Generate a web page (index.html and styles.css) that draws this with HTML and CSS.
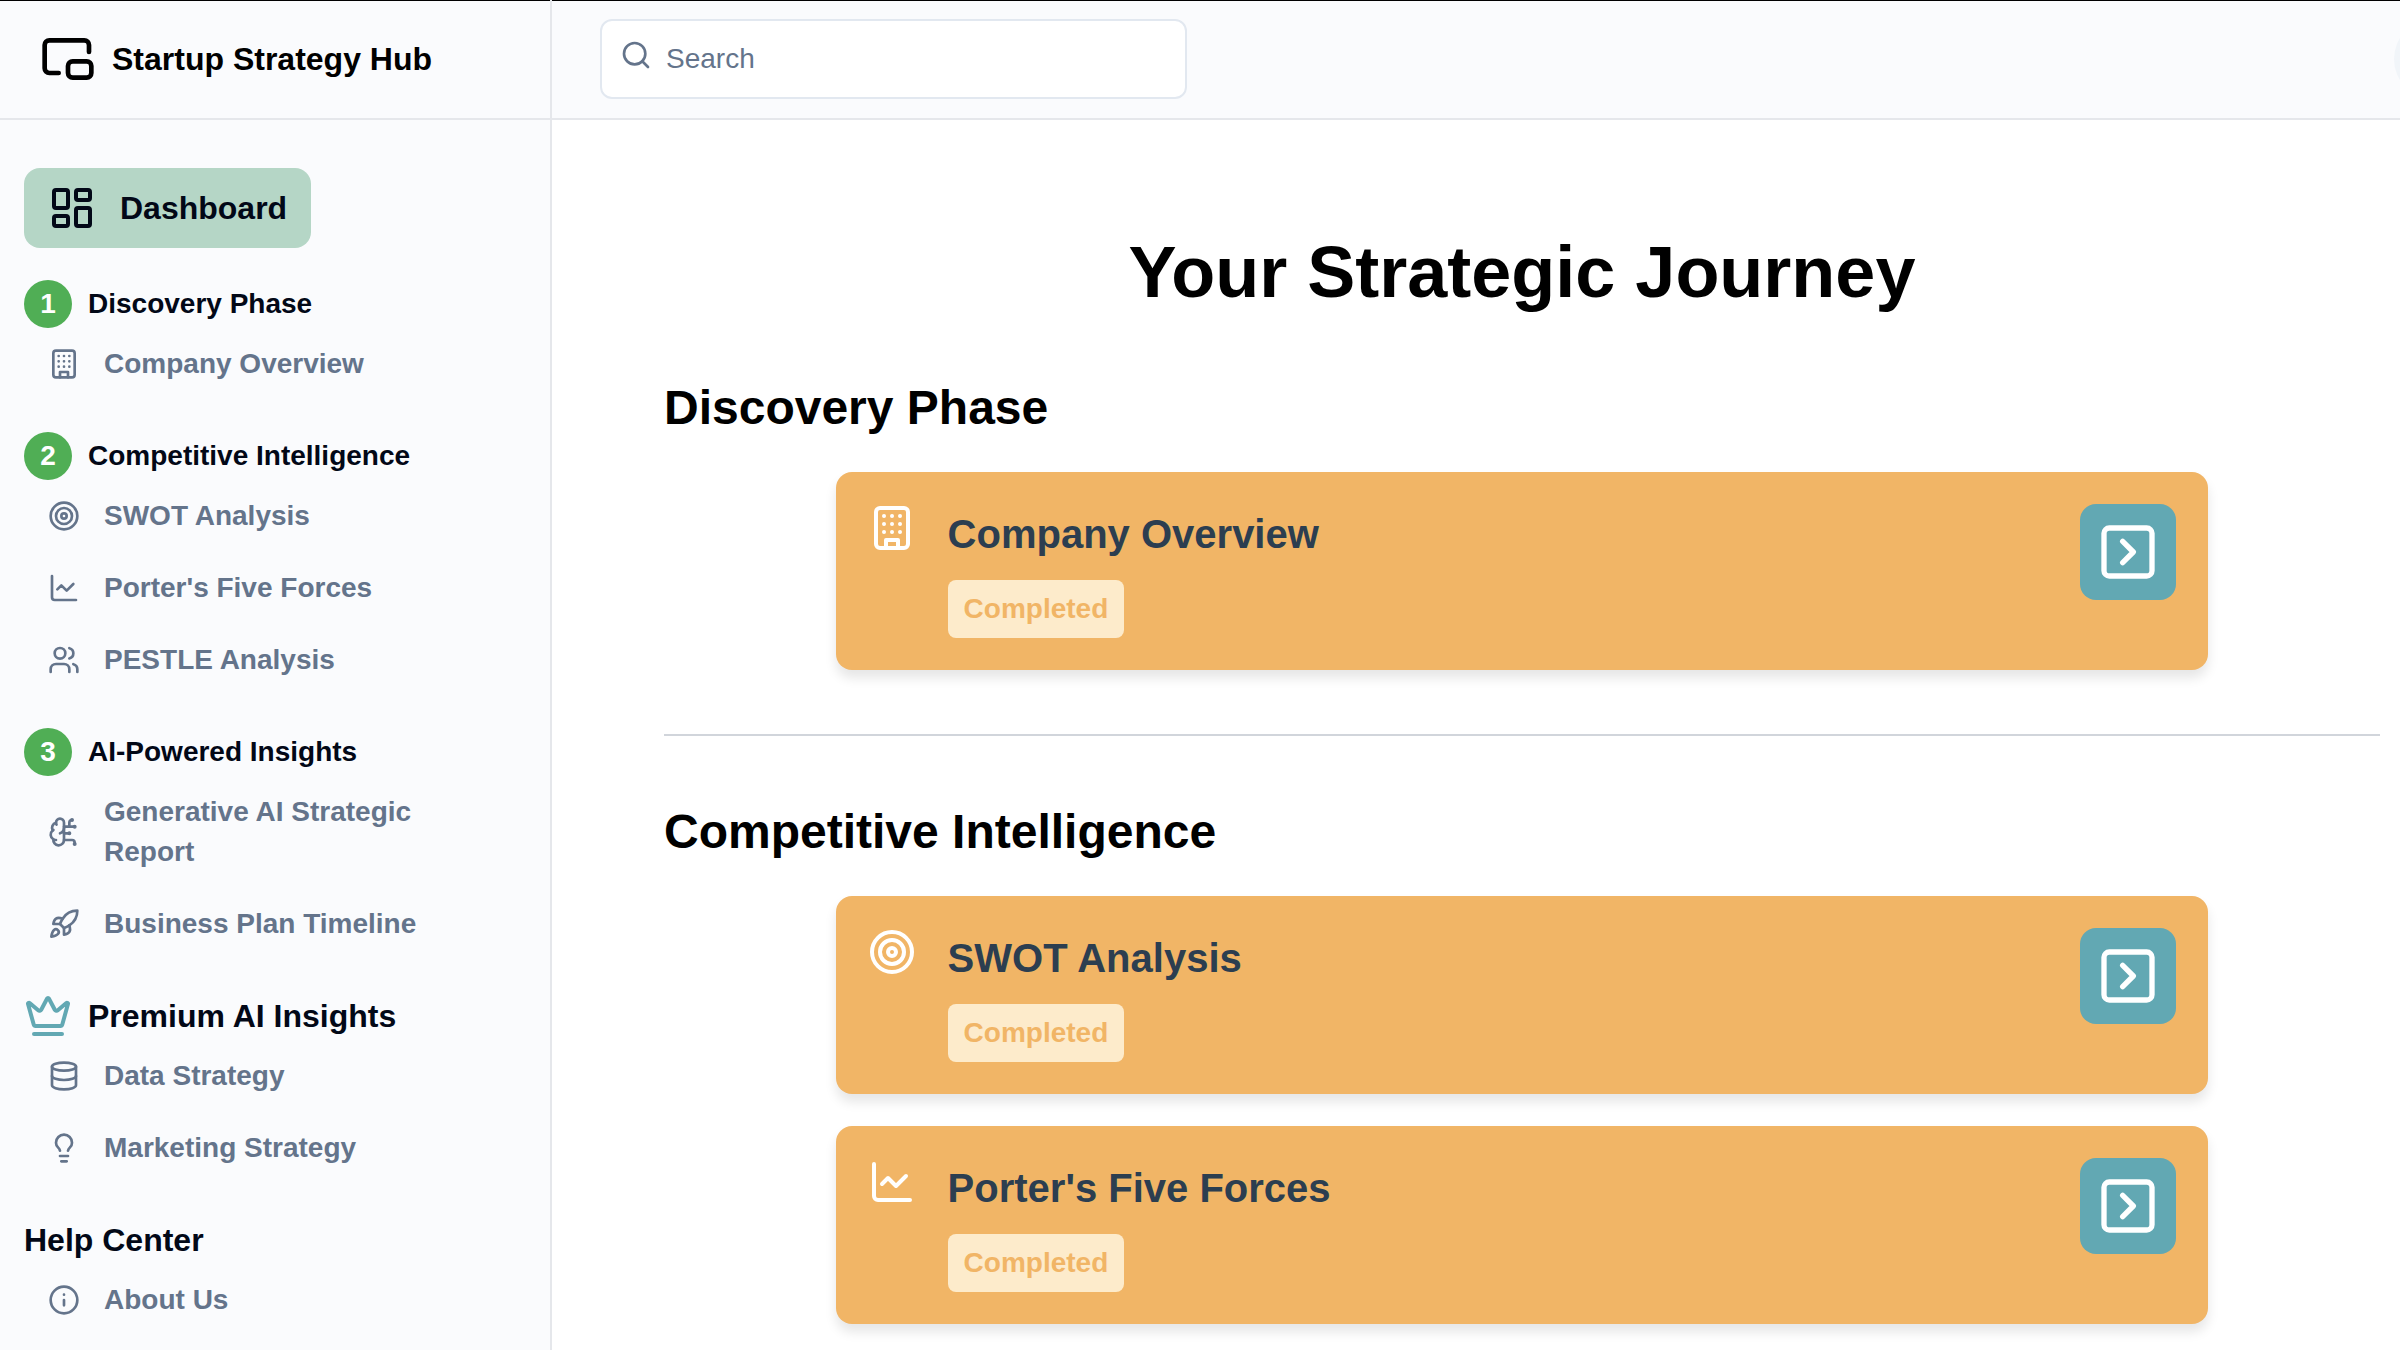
FILE: index.html
```
<!DOCTYPE html>
<html lang="en">
<head>
  <meta charset="UTF-8" />
  <meta name="viewport" content="width=device-width, initial-scale=1.0"/>
  <title>Startup Strategy Hub</title>
  <link rel="stylesheet" href="styles.css">
</head>
<body>
  <!-- shared icons -->
  <svg class="sprite" aria-hidden="true">
    <symbol id="building" viewBox="0 0 24 24">
      <rect width="16" height="20" x="4" y="2" rx="2"/>
      <path d="M9 22v-4h6v4M8 6h.01M16 6h.01M12 6h.01M12 10h.01M12 14h.01M16 10h.01M16 14h.01M8 10h.01M8 14h.01"/>
    </symbol>
    <symbol id="target" viewBox="0 0 24 24">
      <circle cx="12" cy="12" r="10"/><circle cx="12" cy="12" r="6"/><circle cx="12" cy="12" r="2"/>
    </symbol>
    <symbol id="chart" viewBox="0 0 24 24">
      <path d="M3 3v16a2 2 0 0 0 2 2h16"/><path d="m19 9-5 5-4-4-3 3"/>
    </symbol>
    <symbol id="chevron" viewBox="0 0 24 24">
      <rect width="18" height="18" x="3" y="3" rx="2"/><path d="m10 8 4 4-4 4"/>
    </symbol>
  </svg>

  <div class="layout">
    <aside class="sidebar">
      <div class="brand">
        <svg class="icon icon-lg" viewBox="0 0 24 24"><path d="M21 9V6a2 2 0 0 0-2-2H4a2 2 0 0 0-2 2v10a2 2 0 0 0 2 2h4"/><rect width="10" height="7" x="12" y="13" rx="2"/></svg>
        <span>Startup Strategy Hub</span>
      </div>

      <nav class="nav">
        <a href="#" class="nav-dashboard">
          <svg class="icon icon-md" viewBox="0 0 24 24"><rect width="7" height="9" x="3" y="3" rx="1"/><rect width="7" height="5" x="14" y="3" rx="1"/><rect width="7" height="9" x="14" y="12" rx="1"/><rect width="7" height="5" x="3" y="16" rx="1"/></svg>
          Dashboard
        </a>

        <div class="nav-group">
          <h3 class="nav-phase"><span class="step">1</span>Discovery Phase</h3>
          <a href="#" class="nav-link"><svg class="icon"><use href="#building"/></svg>Company Overview</a>
        </div>

        <div class="nav-group">
          <h3 class="nav-phase"><span class="step">2</span>Competitive Intelligence</h3>
          <a href="#" class="nav-link"><svg class="icon"><use href="#target"/></svg>SWOT Analysis</a>
          <a href="#" class="nav-link"><svg class="icon"><use href="#chart"/></svg>Porter's Five Forces</a>
          <a href="#" class="nav-link">
            <svg class="icon" viewBox="0 0 24 24"><path d="M16 21v-2a4 4 0 0 0-4-4H6a4 4 0 0 0-4 4v2"/><circle cx="9" cy="7" r="4"/><path d="M22 21v-2a4 4 0 0 0-3-3.87"/><path d="M16 3.13a4 4 0 0 1 0 7.75"/></svg>
            PESTLE Analysis
          </a>
        </div>

        <div class="nav-group">
          <h3 class="nav-phase"><span class="step">3</span>AI-Powered Insights</h3>
          <a href="#" class="nav-link">
            <svg class="icon" viewBox="0 0 24 24"><path d="M12 5a3 3 0 1 0-5.997.125 4 4 0 0 0-2.526 5.77 4 4 0 0 0 .556 6.588A4 4 0 1 0 12 18Z"/><path d="M9 13a4.5 4.5 0 0 0 3-4"/><path d="M6.003 5.125A3 3 0 0 0 6.401 6.5"/><path d="M3.477 10.896a4 4 0 0 1 .585-.396"/><path d="M6 18a4 4 0 0 1-1.967-.516"/><path d="M12 13h4"/><path d="M12 18h6a2 2 0 0 1 2 2v1"/><path d="M12 8h8"/><path d="M16 8V5a2 2 0 0 1 2-2"/><circle cx="16" cy="13" r=".5"/><circle cx="18" cy="3" r=".5"/><circle cx="20" cy="21" r=".5"/><circle cx="20" cy="8" r=".5"/></svg>
            Generative AI Strategic Report
          </a>
          <a href="#" class="nav-link">
            <svg class="icon" viewBox="0 0 24 24"><path d="M4.500 16.500c-1.500 1.260-2 5-2 5s3.740-.5 5-2c.71-.84.7-2.130-.09-2.910a2.180 2.180 0 0 0-2.910-.09z"/><path d="m12 15-3-3a22 22 0 0 1 2-3.950A12.880 12.880 0 0 1 22 2c0 2.720-.78 7.500-6 11a22.350 22.350 0 0 1-4 2z"/><path d="M9 12H4s.55-3.030 2-4c1.620-1.080 5 0 5 0"/><path d="M12 15v5s3.030-.55 4-2c1.080-1.620 0-5 0-5"/></svg>
            Business Plan Timeline
          </a>
        </div>

        <div class="nav-group">
          <h3 class="nav-phase nav-phase-lg">
            <svg class="icon icon-md crown" viewBox="0 0 24 24"><path d="M11.562 3.266a.5.5 0 0 1 .876 0L15.390 8.870a1 1 0 0 0 1.516.294L21.183 5.500a.5.5 0 0 1 .798.519l-2.834 10.246a1 1 0 0 1-.956.734H5.810a1 1 0 0 1-.957-.734L2.020 6.020a.5.5 0 0 1 .798-.519l4.276 3.664a1 1 0 0 0 1.516-.294z"/><path d="M5 21h14"/></svg>
            Premium AI Insights
          </h3>
          <a href="#" class="nav-link">
            <svg class="icon" viewBox="0 0 24 24"><ellipse cx="12" cy="5" rx="9" ry="3"/><path d="M3 5v14a9 3 0 0 0 18 0V5"/><path d="M3 12a9 3 0 0 0 18 0"/></svg>
            Data Strategy
          </a>
          <a href="#" class="nav-link">
            <svg class="icon" viewBox="0 0 24 24"><path d="M15 14c.2-1 .7-1.700 1.500-2.500 1-.9 1.500-2.200 1.500-3.500A6 6 0 0 0 6 8c0 1 .2 2.200 1.500 3.500.7.7 1.300 1.500 1.500 2.500"/><path d="M9 18h6"/><path d="M10 22h4"/></svg>
            Marketing Strategy
          </a>
        </div>

        <div class="nav-group">
          <h3 class="nav-phase nav-phase-lg">Help Center</h3>
          <a href="#" class="nav-link">
            <svg class="icon" viewBox="0 0 24 24"><circle cx="12" cy="12" r="10"/><path d="M12 16v-4M12 8h.01"/></svg>
            About Us
          </a>
        </div>
      </nav>
    </aside>

    <div class="content">
      <header class="topbar">
        <form class="search-form">
          <div class="search-box">
            <svg class="icon search-icon" viewBox="0 0 24 24"><circle cx="11" cy="11" r="8"/><path d="m21 21-4.300-4.300"/></svg>
            <input type="search" placeholder="Search" aria-label="Search" />
          </div>
        </form>
        <button class="avatar" aria-label="User menu"></button>
      </header>

      <main class="journey">
        <h1>Your Strategic Journey</h1>

        <section class="phase">
          <h2>Discovery Phase</h2>
          <div class="cards">
            <div class="card">
              <svg class="icon icon-md"><use href="#building"/></svg>
              <div class="card-body">
                <h3>Company Overview</h3>
                <span class="badge">Completed</span>
              </div>
              <button class="btn-open" aria-label="Open Company Overview"><svg class="icon"><use href="#chevron"/></svg></button>
            </div>
          </div>
        </section>

        <hr>

        <section class="phase">
          <h2>Competitive Intelligence</h2>
          <div class="cards">
            <div class="card">
              <svg class="icon icon-md"><use href="#target"/></svg>
              <div class="card-body">
                <h3>SWOT Analysis</h3>
                <span class="badge">Completed</span>
              </div>
              <button class="btn-open" aria-label="Open SWOT Analysis"><svg class="icon"><use href="#chevron"/></svg></button>
            </div>
            <div class="card">
              <svg class="icon icon-md"><use href="#chart"/></svg>
              <div class="card-body">
                <h3>Porter's Five Forces</h3>
                <span class="badge">Completed</span>
              </div>
              <button class="btn-open" aria-label="Open Porter's Five Forces"><svg class="icon"><use href="#chevron"/></svg></button>
            </div>
          </div>
        </section>
      </main>
    </div>
  </div>
</body>
</html>
```
FILE: styles.css
```
* {
  box-sizing: border-box;
}

body {
  margin: 0;
  font-family: Helvetica, "Liberation Sans", Arial, sans-serif;
  font-size: 28px;
  line-height: 1.5;
  color: #020817;
  background: #fff;
  overflow-x: hidden;
}

h1, h2, h3 {
  margin: 0;
}

a {
  color: inherit;
  text-decoration: none;
}

button {
  border: none;
  padding: 0;
  cursor: pointer;
}

/* icons */
.sprite {
  display: none;
}

.icon {
  width: 32px;
  height: 32px;
  flex-shrink: 0;
  fill: none;
  stroke: currentColor;
  stroke-width: 2;
  stroke-linecap: round;
  stroke-linejoin: round;
}

.icon-md {
  width: 48px;
  height: 48px;
}

.icon-lg {
  width: 56px;
  height: 56px;
}

.layout {
  display: grid;
  grid-template-columns: 552px minmax(0, 1fr);
  min-height: 100vh;
}

/* sidebar */
.sidebar {
  background: #fafbfd;
  border-right: 2px solid #e5e7eb;
}

.brand, .topbar {
  display: flex;
  align-items: center;
  height: 120px;
  background: #fafbfd;
  border-bottom: 2px solid #e5e7eb;
  box-shadow: inset 0 1px #000;
}

.brand {
  gap: 16px;
  padding: 0 40px;
  font-size: 32px;
  font-weight: bold;
  color: #000;
}

.nav {
  display: flex;
  flex-direction: column;
  align-items: flex-start;
  gap: 32px;
  padding: 48px 24px 0;
  font-weight: bold;
  line-height: 40px;
}

.nav-dashboard {
  display: flex;
  align-items: center;
  gap: 24px;
  padding: 16px 24px;
  font-size: 32px;
  line-height: 48px;
  background: #b5d6c6;
  border-radius: 16px;
}

.nav-phase {
  display: flex;
  align-items: center;
  gap: 16px;
  height: 48px;
  font-size: 28px;
}

.nav-phase-lg {
  font-size: 32px;
}

.step {
  width: 48px;
  height: 48px;
  line-height: 48px;
  border-radius: 50%;
  text-align: center;
  color: #fff;
  background: #50ae55;
}

.crown {
  color: #62a8b3;
}

.nav-link {
  display: flex;
  align-items: center;
  gap: 24px;
  padding: 16px 24px;
  color: #64748b;
}

/* top bar, the avatar hangs over the right edge */
.topbar {
  gap: 32px;
  margin-right: -74px;
  padding-left: 48px;
}

.search-form {
  flex: 1;
}

.search-box {
  position: relative;
  width: 33.333%;
  color: #64748b;
}

.search-icon {
  position: absolute;
  left: 20px;
  top: 20px;
}

.search-box input {
  display: block;
  width: 100%;
  height: 80px;
  padding: 0 24px 0 64px;
  border: 2px solid #e2e8f0;
  border-radius: 12px;
  font: inherit;
  background: #fff;
}

.search-box input::placeholder {
  color: #64748b;
}

.avatar {
  width: 80px;
  height: 80px;
  border-radius: 50%;
  background: #f1f5f9;
}

/* journey */
.journey {
  padding: 112px 20px 0 112px;
  color: #000;
}

h1 {
  margin-bottom: 64px;
  font-size: 72px;
  line-height: 80px;
  text-align: center;
}

h2 {
  margin-bottom: 32px;
  font-size: 48px;
  line-height: 64px;
}

hr {
  margin: 64px 0;
  border: none;
  border-top: 2px solid #d1d5db;
}

.cards {
  display: flex;
  flex-direction: column;
  gap: 32px;
  width: 80%;
  margin: 0 auto;
}

.card {
  display: flex;
  align-items: flex-start;
  gap: 32px;
  padding: 32px;
  color: #fff;
  background: #f1b566;
  border-radius: 16px;
  box-shadow: 0 8px 12px rgba(0, 0, 0, 0.1);
}

.card-body {
  display: flex;
  flex: 1;
  flex-direction: column;
  align-items: flex-start;
  gap: 16px;
}

.card h3 {
  font-size: 40px;
  color: #2c3e50;
}

.badge {
  padding: 8px 16px;
  font-weight: bold;
  color: #f1b566;
  background: #fdebcb;
  border-radius: 8px;
}

.btn-open {
  display: flex;
  align-items: center;
  justify-content: center;
  width: 96px;
  height: 96px;
  color: #fff;
  background: #62a8b3;
  border-radius: 16px;
}

.btn-open .icon {
  width: 64px;
  height: 64px;
}
```
